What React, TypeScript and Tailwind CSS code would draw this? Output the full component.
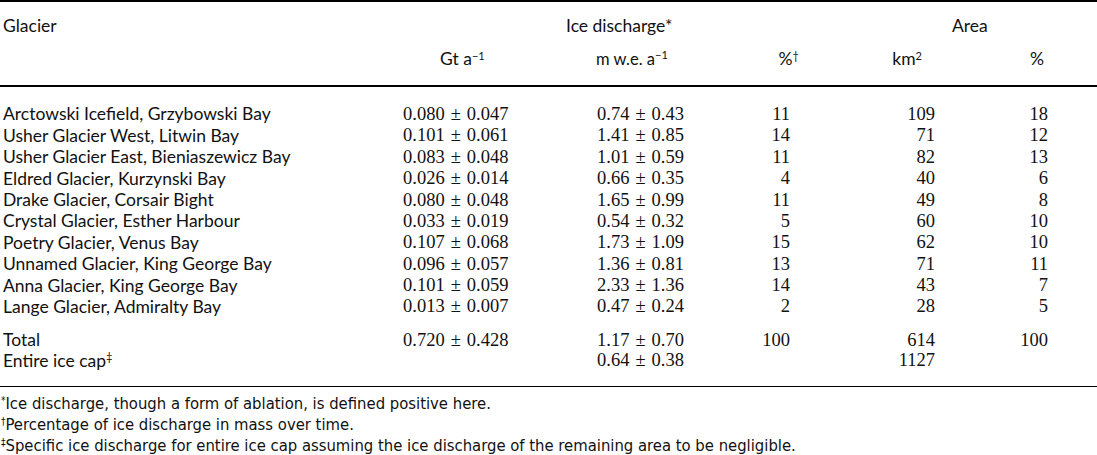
import * as React from "react";

type Row = {
  name: string;
  gt: [string, string];
  mwe: [string, string];
  pct: string;
  km: string;
  area: string;
};

const ROWS: Row[] = [
  { name: "Arctowski Icefield, Grzybowski Bay", gt: ["0.080", "0.047"], mwe: ["0.74", "0.43"], pct: "11", km: "109", area: "18" },
  { name: "Usher Glacier West, Litwin Bay", gt: ["0.101", "0.061"], mwe: ["1.41", "0.85"], pct: "14", km: "71", area: "12" },
  { name: "Usher Glacier East, Bieniaszewicz Bay", gt: ["0.083", "0.048"], mwe: ["1.01", "0.59"], pct: "11", km: "82", area: "13" },
  { name: "Eldred Glacier, Kurzynski Bay", gt: ["0.026", "0.014"], mwe: ["0.66", "0.35"], pct: "4", km: "40", area: "6" },
  { name: "Drake Glacier, Corsair Bight", gt: ["0.080", "0.048"], mwe: ["1.65", "0.99"], pct: "11", km: "49", area: "8" },
  { name: "Crystal Glacier, Esther Harbour", gt: ["0.033", "0.019"], mwe: ["0.54", "0.32"], pct: "5", km: "60", area: "10" },
  { name: "Poetry Glacier, Venus Bay", gt: ["0.107", "0.068"], mwe: ["1.73", "1.09"], pct: "15", km: "62", area: "10" },
  { name: "Unnamed Glacier, King George Bay", gt: ["0.096", "0.057"], mwe: ["1.36", "0.81"], pct: "13", km: "71", area: "11" },
  { name: "Anna Glacier, King George Bay", gt: ["0.101", "0.059"], mwe: ["2.33", "1.36"], pct: "14", km: "43", area: "7" },
  { name: "Lange Glacier, Admiralty Bay", gt: ["0.013", "0.007"], mwe: ["0.47", "0.24"], pct: "2", km: "28", area: "5" },
];

const sans = "font-['Lato','Open_Sans',sans-serif]";
const serif = "font-['Liberation_Serif','Times_New_Roman',serif] text-[18.5px]";
const grid = "grid grid-cols-[400px_194px_120px_76px_145px_113px]";

function PlusMinus({ v }: { v: [string, string] }) {
  return (
    <span className={`${serif} whitespace-nowrap`}>
      {v[0]}
      <span className="mx-[6px]">±</span>
      {v[1]}
    </span>
  );
}

function DataRow({ row }: { row: Row }) {
  return (
    <div className={`${grid} h-[21.4px] items-center`}>
      <div className="pl-[3px] whitespace-nowrap">{row.name}</div>
      <div className="pl-[3px]">
        <PlusMinus v={row.gt} />
      </div>
      <div className="pl-[3px]">
        <PlusMinus v={row.mwe} />
      </div>
      <div className={`${serif} text-right`}>{row.pct}</div>
      <div className={`${serif} text-right`}>{row.km}</div>
      <div className={`${serif} text-right`}>{row.area}</div>
    </div>
  );
}

export default function App() {
  return (
    <div className={`w-[1097px] h-[455px] overflow-hidden bg-white text-[#111] text-[17.5px] leading-none ${sans}`}>
      <div className="h-[2px] bg-black" />

      {/* header */}
      <div className={`${grid} h-[48px] items-center`}>
        <div className="pl-[3px]">Glacier</div>
        <div />
        <div className="col-span-2 -ml-[28px]">Ice discharge*</div>
        <div />
        <div className="pl-[17px]">Area</div>
      </div>
      <div className={`${grid} h-[14px] items-center`}>
        <div />
        <div className="pl-[40px]">
          Gt a<sup className="text-[11px]">−1</sup>
        </div>
        <div className="pl-[2px] text-[16.5px]">
          m w.e. a<sup className="text-[11px]">−1</sup>
        </div>
        <div className="text-right -mr-[9px]">
          %<sup className="text-[11px]">†</sup>
        </div>
        <div className="text-right pr-[13px]">
          km<sup className="text-[11px]">2</sup>
        </div>
        <div className="text-right pr-[4px]">%</div>
      </div>
      <div className="mt-[21px] h-[1.5px] bg-black" />

      {/* body */}
      <div className="pt-[17px]">
        {ROWS.map((r) => (
          <DataRow key={r.name} row={r} />
        ))}
      </div>
      <div className="pt-[12px]">
        <div className={`${grid} h-[21.4px] items-center`}>
          <div className="pl-[3px]">Total</div>
          <div className="pl-[3px]">
            <PlusMinus v={["0.720", "0.428"]} />
          </div>
          <div className="pl-[3px]">
            <PlusMinus v={["1.17", "0.70"]} />
          </div>
          <div className={`${serif} text-right`}>100</div>
          <div className={`${serif} text-right`}>614</div>
          <div className={`${serif} text-right`}>100</div>
        </div>
        <div className={`${grid} h-[19px] items-center`}>
          <div className="pl-[3px]">
            Entire ice cap<sup className="text-[11px]">‡</sup>
          </div>
          <div />
          <div className="pl-[3px]">
            <PlusMinus v={["0.64", "0.38"]} />
          </div>
          <div />
          <div className={`${serif} text-right`}>1127</div>
          <div />
        </div>
      </div>
      <div className="mt-[16px] h-[1.5px] bg-black" />

      {/* footnotes */}
      <div className="pt-[6px] pl-[1px] font-['Liberation_Sans_Narrow','DejaVu_Sans_Condensed',sans-serif] text-[16.5px] leading-[21px]">
        <div>
          <sup className="text-[10px]">*</sup>Ice discharge, though a form of ablation, is defined positive here.
        </div>
        <div>
          <sup className="text-[10px]">†</sup>Percentage of ice discharge in mass over time.
        </div>
        <div>
          <sup className="text-[10px]">‡</sup>Specific ice discharge for entire ice cap assuming the ice discharge of the remaining area to be negligible.
        </div>
      </div>
    </div>
  );
}
